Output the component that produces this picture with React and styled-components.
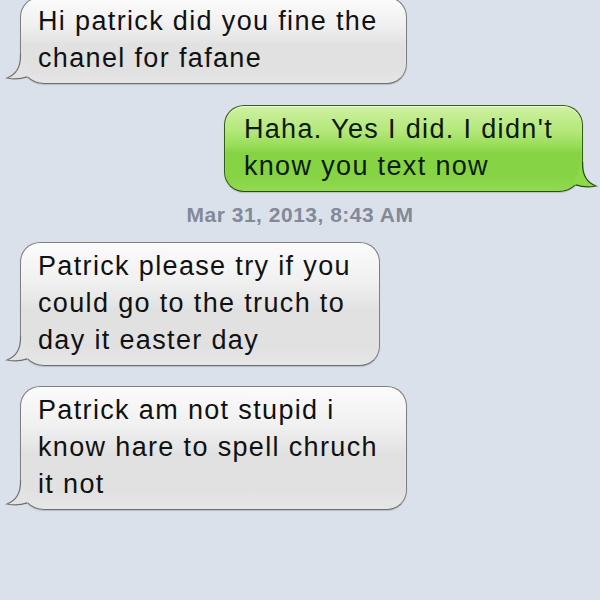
import React from 'react';
import styled, { createGlobalStyle } from 'styled-components';

const messages = [
  { id: 1, mine: false, top: -3, lines: ['Hi patrick did you fine the', 'chanel for fafane'] },
  { id: 2, mine: true, top: 21, lines: ["Haha. Yes I did. I didn't", 'know you text now'] },
  { id: 'stamp', stamp: 'Mar 31, 2013, 8:43 AM' },
  {
    id: 3,
    mine: false,
    top: 14,
    lines: ['Patrick please try if you', 'could go to the truch to', 'day it easter day'],
  },
  {
    id: 4,
    mine: false,
    top: 20,
    lines: ['Patrick am not stupid i', 'know hare to spell chruch', 'it not'],
  },
];

const GlobalStyle = createGlobalStyle`
  html, body {
    margin: 0;
    padding: 0;
    background: #dbe1eb;
  }
  body {
    font-family: "Liberation Sans", Arial, sans-serif;
    overflow: hidden;
  }
`;

const Thread = styled.div`
  width: 600px;
  height: 600px;
  display: flex;
  flex-direction: column;
  background: #dbe1eb;
  overflow: hidden;
`;

const Row = styled.div`
  display: flex;
  justify-content: ${(p) => (p.$mine ? 'flex-end' : 'flex-start')};
  padding: ${(p) => (p.$mine ? '0 17px 0 0' : '0 0 0 20px')};
  margin-top: ${(p) => p.$top}px;
`;

const Bubble = styled.div`
  position: relative;
  padding: ${(p) => (p.$mine ? '5px 29px 6px 19px' : '5px 28px 6px 17px')};
  border-radius: ${(p) => (p.$mine ? '20px 20px 24px 20px' : '20px 20px 20px 24px')};
  border: 1px solid ${(p) => (p.$mine ? '#2f5e14' : '#7f7f7f')};
  border-bottom-color: ${(p) => (p.$mine ? '#27500f' : '#6f6f6f')};
  background: ${(p) =>
    p.$mine
      ? 'linear-gradient(to bottom, #cff1a0 0%, #b3e77a 30%, #96dc55 48%, #86d444 55%, #86d444 85%, #92da52 100%)'
      : 'linear-gradient(to bottom, #fbfbfb 0%, #f1f1f1 30%, #e6e6e6 48%, #e1e1e1 55%, #e1e1e1 85%, #e6e6e6 100%)'};
  box-shadow: 0 1px 1px rgba(40, 50, 70, 0.2), inset 0 1px 1px rgba(255, 255, 255, 0.7);
  color: ${(p) => (p.$mine ? '#0d1a06' : '#111')};
  font-size: 27px;
  letter-spacing: 1.35px;
  line-height: 37px;
`;

const Line = styled.div`
  white-space: nowrap;
`;

const TailSvg = styled.svg`
  position: absolute;
  bottom: -1px;
  ${(p) => (p.$mine ? 'right: -15px; transform: scaleX(-1);' : 'left: -15px;')}
  width: 40px;
  height: 36px;
  overflow: visible;
`;

const Stamp = styled.div`
  margin-top: 10px;
  text-align: center;
  font-weight: bold;
  font-size: 21px;
  letter-spacing: 0.5px;
  line-height: 26px;
  color: #838a97;
`;

const Tail = ({ mine }) => {
  const fill = mine ? '#8dd84c' : '#e3e3e3';
  const stroke = mine ? '#27500f' : '#707070';
  return (
    <TailSvg $mine={mine} viewBox="0 0 40 36">
      <path
        d="M13.5,6 L13.5,8 C13.5,20 9,27 1,30 C8,31.5 15,31 21,28.9 L25,27 L19,18 L16.5,6 Z"
        fill={fill}
      />
      <path
        d="M14.5,6 L14.5,8 C14.5,20 9,27 1,30 C8,31.5 15,31 21.2,28.9"
        fill="none"
        stroke={stroke}
        strokeWidth="1.2"
      />
    </TailSvg>
  );
};

export default function App() {
  return (
    <>
      <GlobalStyle />
      <Thread>
        {messages.map((m) =>
          m.stamp ? (
            <Stamp key={m.id}>{m.stamp}</Stamp>
          ) : (
            <Row key={m.id} $mine={m.mine} $top={m.top}>
              <Bubble $mine={m.mine}>
                {m.lines.map((l) => (
                  <Line key={l}>{l}</Line>
                ))}
                <Tail mine={m.mine} />
              </Bubble>
            </Row>
          )
        )}
      </Thread>
    </>
  );
}
